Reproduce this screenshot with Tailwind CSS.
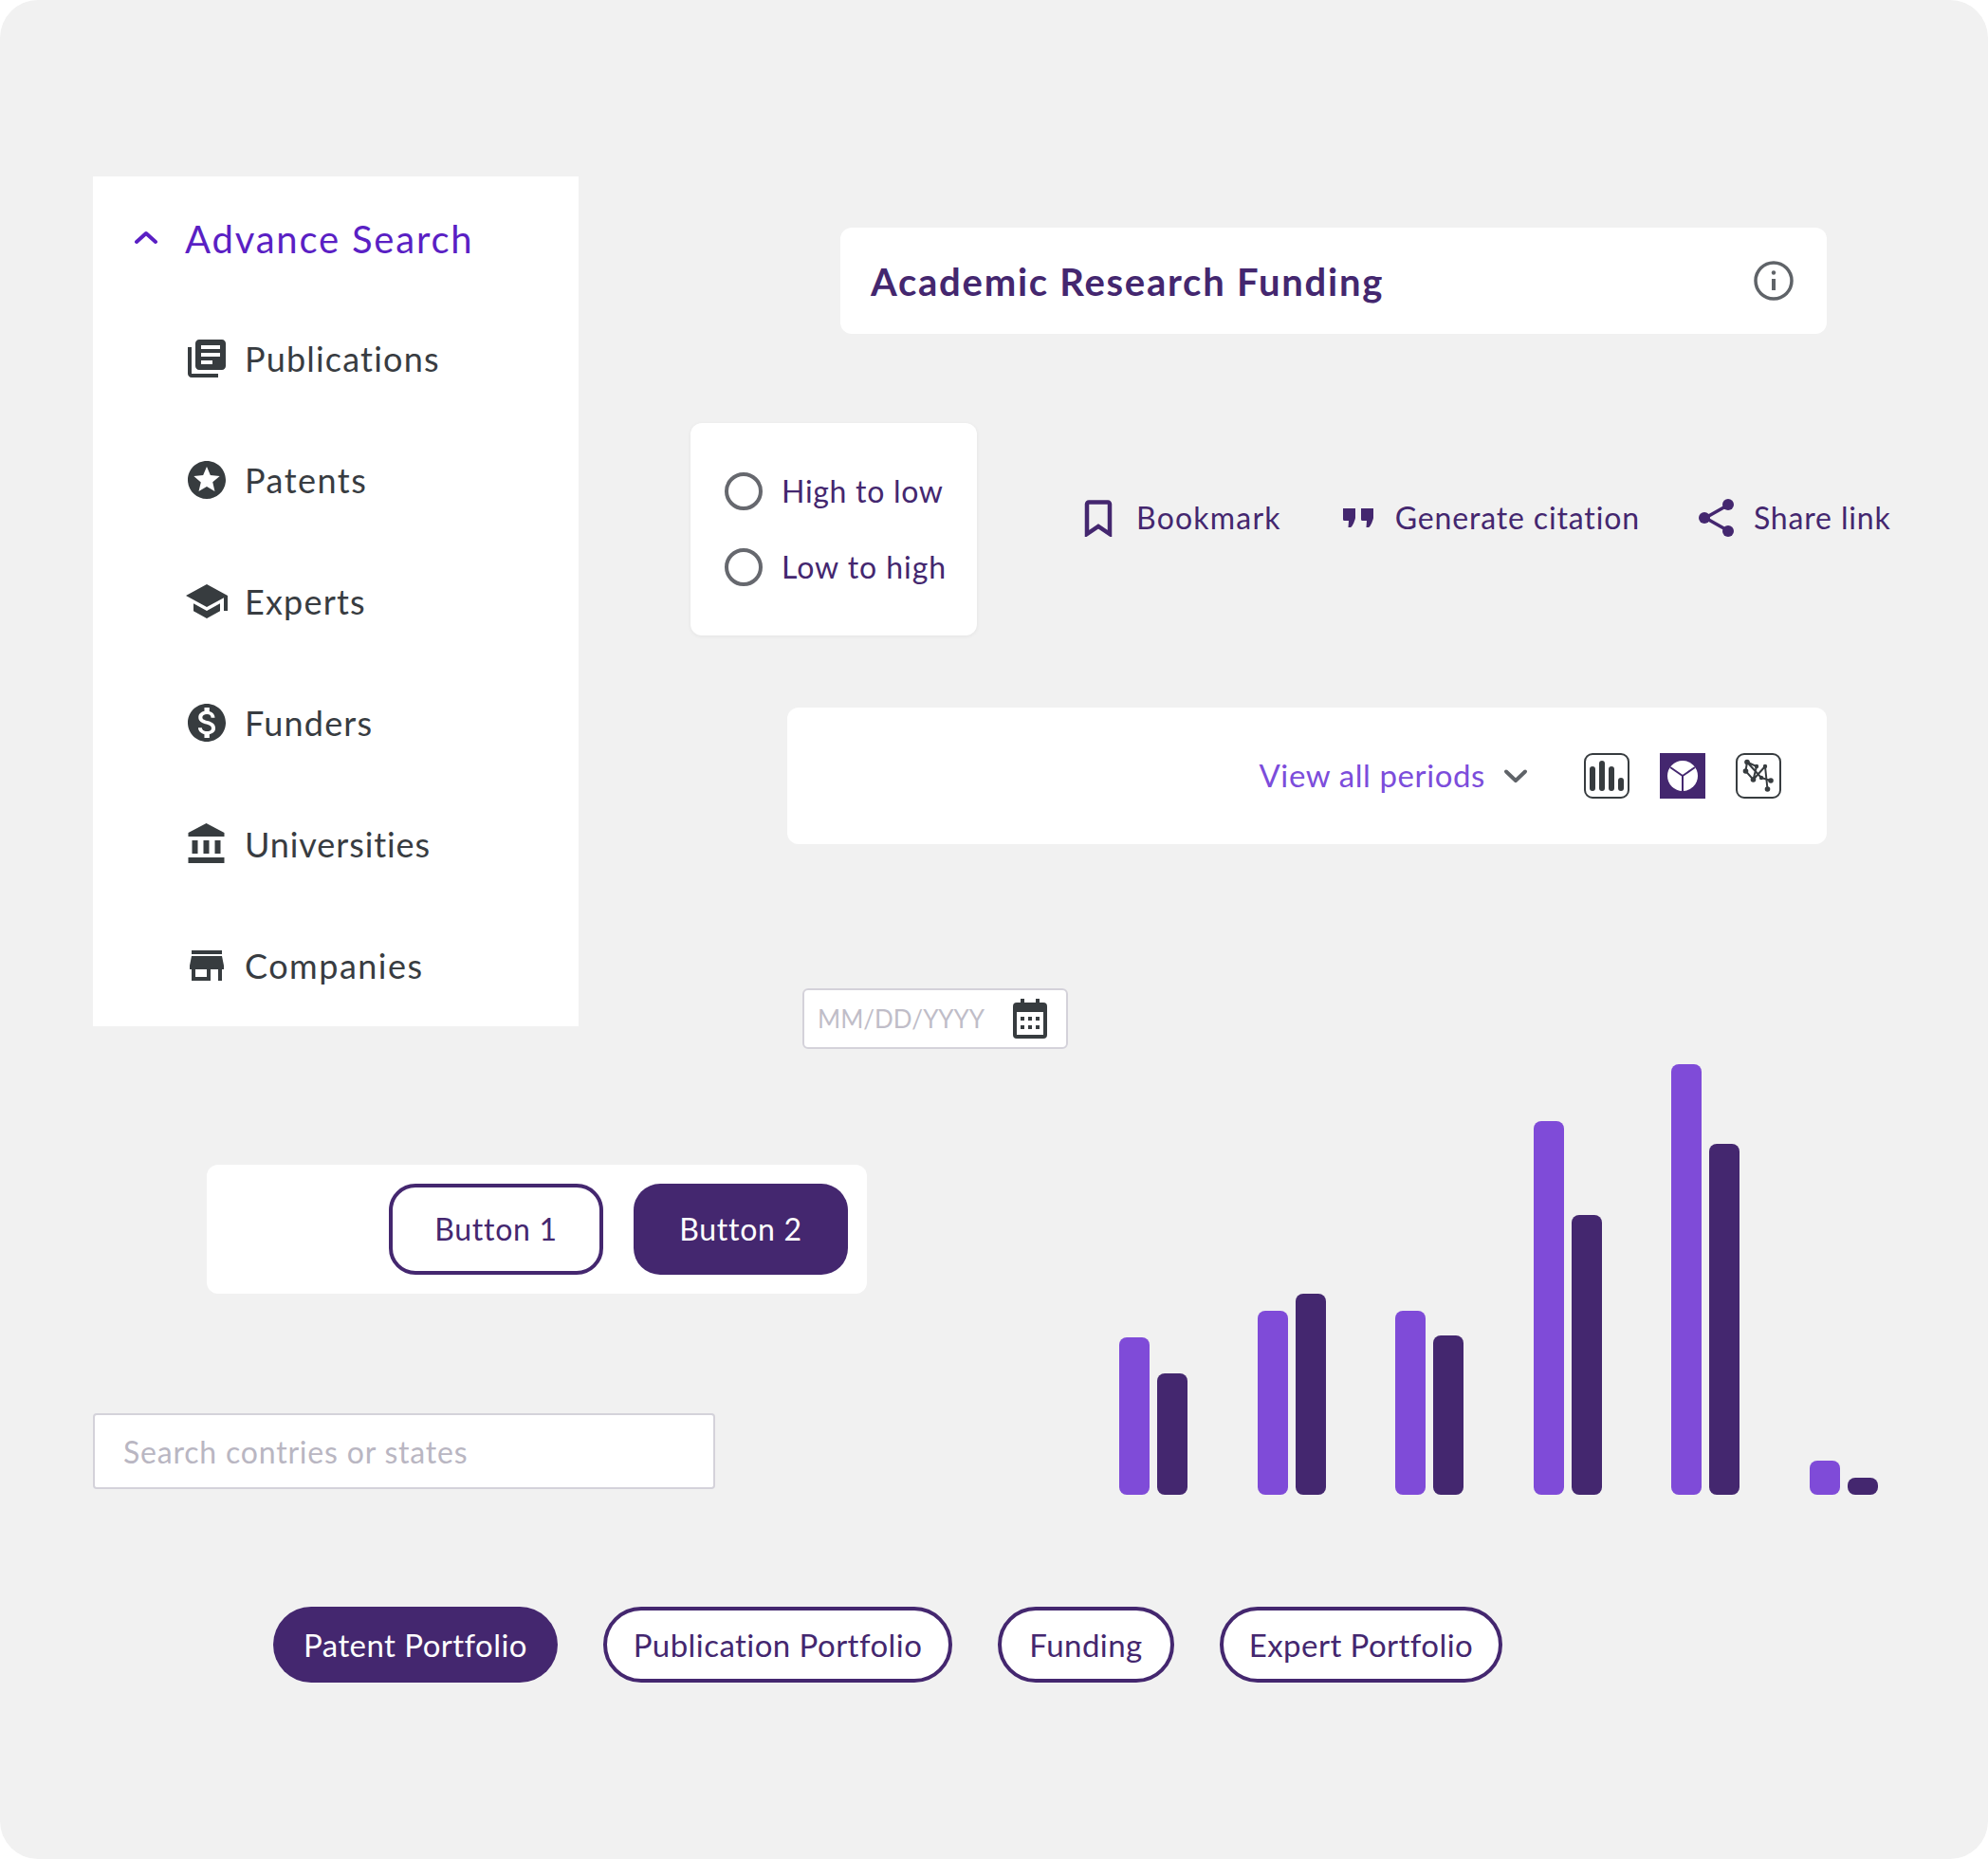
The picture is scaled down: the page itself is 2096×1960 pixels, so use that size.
<!doctype html>
<html lang="en">
<head>
<meta charset="utf-8">
<title>UI components</title>
<script src="https://cdn.jsdelivr.net/npm/@tailwindcss/browser@4"></script>
</head>
<body class="bg-white font-[Lato,sans-serif]">
<main class="w-[2096px] h-[1960px] bg-[#f1f1f1] rounded-[40px] overflow-hidden pt-[186px]">
  <!-- Upper section -->
  <section class="flex items-start h-[920px] pl-[98px]">
    <nav class="w-[512px] h-[896px] bg-white pt-[34px] shrink-0 text-[#383c41]">
      <div class="flex items-center h-16 pl-[42px] text-[#5a1fc4]">
        <svg class="w-7 h-7" viewBox="0 0 28 28" fill="none" stroke="currentColor" stroke-width="4" stroke-linecap="round" stroke-linejoin="round"><path d="M4 17l10-9 10 9"/></svg>
        <span class="ml-[27px] text-[40px] leading-none tracking-[1.8px]">Advance Search</span>
      </div>
      <ul class="mt-[70px] pl-[96px] flex flex-col gap-20 text-[36px] leading-none tracking-[1.2px]">
        <li class="flex items-center h-12 gap-4"><svg class="w-12 h-12" viewBox="0 0 24 24" fill="#373c3f"><path d="M4 6H2v14c0 1.1.9 2 2 2h14v-2H4V6zm16-4H8c-1.1 0-2 .9-2 2v12c0 1.1.9 2 2 2h12c1.1 0 2-.9 2-2V4c0-1.1-.9-2-2-2zm-1 9H9V9h10v2zm-4 4H9v-2h6v2zm4-8H9V5h10v2z"/></svg>Publications</li>
        <li class="flex items-center h-12 gap-4 tracking-[1.5px]"><svg class="w-12 h-12" viewBox="0 0 24 24" fill="#373c3f"><path d="M11.99 2C6.47 2 2 6.48 2 12s4.47 10 9.99 10C17.52 22 22 17.52 22 12S17.52 2 11.99 2zm4.24 16L12 15.45 7.77 18l1.12-4.81-3.73-3.23 4.92-.42L12 5l1.92 4.53 4.92.42-3.73 3.23L16.23 18z"/></svg>Patents</li>
        <li class="flex items-center h-12 gap-4"><svg class="w-12 h-12" viewBox="0 0 24 24" fill="#373c3f"><path d="M5 13.18v4L12 21l7-3.82v-4L12 17l-7-3.82zM12 3L1 9l11 6 9-4.91V17h2V9L12 3z"/></svg>Experts</li>
        <li class="flex items-center h-12 gap-4"><svg class="w-12 h-12" viewBox="0 0 24 24" fill="#373c3f"><path d="M12 2C6.48 2 2 6.48 2 12s4.48 10 10 10 10-4.48 10-10S17.52 2 12 2zm1.41 16.09V20h-2.67v-1.93c-1.71-.36-3.16-1.46-3.27-3.4h1.96c.1 1.05.82 1.87 2.65 1.87 1.96 0 2.4-.98 2.4-1.59 0-.83-.44-1.61-2.67-2.14-2.48-.6-4.18-1.62-4.18-3.67 0-1.72 1.39-2.84 3.11-3.21V4h2.67v1.95c1.86.45 2.79 1.86 2.85 3.39H14.3c-.05-1.11-.64-1.87-2.22-1.87-1.5 0-2.4.68-2.4 1.64 0 .84.65 1.39 2.67 1.91s4.18 1.39 4.18 3.91c-.01 1.83-1.38 2.83-3.12 3.16z"/></svg>Funders</li>
        <li class="flex items-center h-12 gap-4 tracking-[0.9px]"><svg class="w-12 h-12" viewBox="1 0 21.5 24" fill="#373c3f"><path d="M4 10v7h3v-7H4zm6 0v7h3v-7h-3zM2 22h19v-3H2v3zm14-12v7h3v-7h-3zm-4.5-9L2 6v2h19V6l-9.5-5z"/></svg>Universities</li>
        <li class="flex items-center h-12 gap-4 tracking-[1.5px]"><svg class="w-12 h-12" viewBox="0 0 24 24" fill="#373c3f"><path d="M20 4H4v2h16V4zm1 10v-2l-1-5H4l-1 5v2h1v6h10v-6h4v6h2v-6h1zm-9 4H6v-4h6v4z"/></svg>Companies</li>
      </ul>
    </nav>

    <div class="flex flex-col items-start">
      <div class="mt-[54px] ml-[276px] w-[1040px] h-[112px] bg-white rounded-xl flex items-center justify-between pl-8 pr-[34px]">
        <h1 class="pt-0.5 text-[40px] leading-none font-bold tracking-[1.75px] text-[#44276f]">Academic Research Funding</h1>
        <svg class="w-[44px] h-[44px]" viewBox="0 0 44 44" fill="none" stroke="#5f6368" stroke-width="3.5"><circle cx="22" cy="22" r="19"/><path d="M22 20v12" stroke-width="4"/><circle cx="22" cy="13.5" r="2.2" fill="#5f6368" stroke="none"/></svg>
      </div>

      <div class="mt-[94px] ml-[118px] flex items-center">
        <div class="w-[302px] h-[224px] bg-white rounded-xl shadow-[0_1px_4px_rgba(0,0,0,0.06)] pl-9 pt-[52px] flex flex-col gap-10 text-[32px] leading-none tracking-[0.7px] text-[#44276f]">
          <label class="flex items-center h-10 gap-5"><span class="w-10 h-10 rounded-full border-4 border-[#66686e] bg-white"></span>High to low</label>
          <label class="flex items-center h-10 gap-5 tracking-[0.95px]"><span class="w-10 h-10 rounded-full border-4 border-[#66686e] bg-white"></span>Low to high</label>
        </div>
        <div class="ml-[110px] -mt-[24px] flex items-center text-[32px] leading-none tracking-[0.85px] text-[#44276f]">
          <svg class="w-[36px] h-[40px]" viewBox="0 0 36 40" fill="none" stroke="#44276f" stroke-width="4.5"><path d="M6 37V5.5a2 2 0 0 1 2-2h20a2 2 0 0 1 2 2V37l-12-8z"/></svg>
          <span class="ml-[22px] tracking-[1.2px]">Bookmark</span>
          <svg class="w-[36px] h-[24px] ml-[63px]" viewBox="0 0 36 24" fill="#44276f"><path d="M2 2h13v10c0 1-3 10-5 10H7.500L8 15H3.500A1.500 1.500 0 0 1 2 13.500zM21 2h13v10c0 1-3 10-5 10h-2.500l.5-7h-4.500a1.500 1.500 0 0 1-1.500-1.500z"/></svg>
          <span class="ml-[21px]">Generate citation</span>
          <svg class="w-[40px] h-[42px] ml-[61px]" viewBox="0 0 40 42" fill="#44276f" stroke="#44276f"><path d="M31 8 8 21l23 13" fill="none" stroke-width="3.5"/><circle cx="32" cy="7" r="6" stroke="none"/><circle cx="7" cy="21" r="6" stroke="none"/><circle cx="32" cy="35" r="6" stroke="none"/></svg>
          <span class="ml-[19px]">Share link</span>
        </div>
      </div>

      <div class="mt-[76px] ml-[220px] w-[1096px] h-[144px] bg-white rounded-xl flex items-center justify-end pr-12">
        <span class="-mt-0.5 text-[#7c4ddb] text-[33px] leading-none tracking-[0.6px]">View all periods</span>
        <svg class="w-7 h-7 ml-[18px]" viewBox="0 0 28 28" fill="none" stroke="#5f6368" stroke-width="4" stroke-linecap="round" stroke-linejoin="round"><path d="M4 9.500l10 9.500 10-9.500"/></svg>
        <svg class="w-12 h-12 ml-[58px]" viewBox="0 0 48 48" fill="#373c3f"><rect x="1" y="1" width="46" height="46" rx="8" fill="none" stroke="#373c3f" stroke-width="2"/><rect x="6" y="14" width="6" height="26" rx="3"/><rect x="16" y="8" width="6" height="32" rx="3"/><rect x="26" y="14" width="6" height="26" rx="3"/><rect x="36" y="26" width="6" height="14" rx="3"/></svg>
        <svg class="w-12 h-12 ml-8" viewBox="0 0 48 48"><rect width="48" height="48" fill="#44276f"/><circle cx="24" cy="24" r="16" fill="#fff"/><path d="M24 24v16M24 24 11 15M24 24l13-9" stroke="#44276f" stroke-width="2" fill="none"/></svg>
        <svg class="w-12 h-12 ml-8" viewBox="0 0 48 48" fill="#373c3f"><rect x="1" y="1" width="46" height="46" rx="8" fill="none" stroke="#373c3f" stroke-width="2"/><path d="M12 9.500l10 4.500-3.500 14-8-9zM31 14 18.500 28M31 14l2.500 24M27 26l10 3M12 9.500l15 16.500" fill="none" stroke="#373c3f" stroke-width="2"/><circle cx="12" cy="9.500" r="2.800"/><circle cx="22" cy="14" r="2.200"/><circle cx="31" cy="14" r="2.200"/><circle cx="10.500" cy="19" r="2.800"/><circle cx="18.500" cy="28" r="2.800"/><circle cx="27" cy="26" r="2.200"/><circle cx="37" cy="29" r="2.800"/><circle cx="33.500" cy="38" r="2.800"/></svg>
      </div>

      <div class="mt-[152px] ml-[236px] w-[280px] h-16 bg-white border-2 border-[#d4d2da] rounded-md flex items-center justify-between pl-[14px] pr-[20px] text-[26px] leading-none text-[#c0bdc8]">
        <span>MM/DD/YYYY</span>
        <svg class="w-9 h-[42px]" viewBox="0 0 36 42" fill="#373c3f"><path d="M8 0h4v4h12V0h4v4h4a4 4 0 0 1 4 4v30a4 4 0 0 1-4 4H4a4 4 0 0 1-4-4V8a4 4 0 0 1 4-4h4zM4 14v24h28V14z"/><path d="M8 19h4v4H8zM16 19h4v4h-4zM24 19h4v4h-4zM8 28h4v4H8zM16 28h4v4h-4zM24 28h4v4h-4z"/></svg>
      </div>
    </div>
  </section>

  <!-- Middle section -->
  <section class="mt-4 flex items-start pl-[98px]">
    <div class="w-[1082px] shrink-0 pt-[106px]">
      <div class="ml-[120px] w-[696px] h-[136px] bg-white rounded-xl flex items-center justify-end gap-8 pr-5 text-[32px] leading-none tracking-[0.7px]">
        <button class="w-[226px] h-24 rounded-[28px] border-4 border-[#44276f] bg-white text-[#44276f]">Button 1</button>
        <button class="w-[226px] h-24 rounded-[28px] bg-[#44276f] text-white">Button 2</button>
      </div>
      <div class="mt-[126px] w-[656px] h-20 bg-white border-2 border-[#d4d2da] rounded flex items-center pl-[30px] pt-0.5 text-[32px] leading-none tracking-[0.8px] text-[#b9b6c2]">Search contries or states</div>
    </div>
    <div class="flex items-end h-[454px] gap-[73.6px]">
      <div class="flex items-end gap-2"><div class="w-8 h-[166px] bg-[#7f4bd8] rounded-lg"></div><div class="w-8 h-[128px] bg-[#44276f] rounded-lg"></div></div>
      <div class="flex items-end gap-2"><div class="w-8 h-[194px] bg-[#7f4bd8] rounded-lg"></div><div class="w-8 h-[212px] bg-[#44276f] rounded-lg"></div></div>
      <div class="flex items-end gap-2"><div class="w-8 h-[194px] bg-[#7f4bd8] rounded-lg"></div><div class="w-8 h-[168px] bg-[#44276f] rounded-lg"></div></div>
      <div class="flex items-end gap-2"><div class="w-8 h-[394px] bg-[#7f4bd8] rounded-lg"></div><div class="w-8 h-[295px] bg-[#44276f] rounded-lg"></div></div>
      <div class="flex items-end gap-2"><div class="w-8 h-[454px] bg-[#7f4bd8] rounded-lg"></div><div class="w-8 h-[370px] bg-[#44276f] rounded-lg"></div></div>
      <div class="flex items-end gap-2"><div class="w-8 h-[36px] bg-[#7f4bd8] rounded-lg"></div><div class="w-8 h-[18px] bg-[#44276f] rounded-lg"></div></div>
    </div>
  </section>

  <!-- Pills -->
  <section class="mt-[118px] pl-[288px] flex gap-12 text-[33px] leading-none tracking-[0.45px] text-[#44276f]">
    <button class="w-[300px] h-20 rounded-full bg-[#44276f] text-white">Patent Portfolio</button>
    <button class="w-[368px] h-20 rounded-full border-4 border-[#44276f] bg-white">Publication Portfolio</button>
    <button class="w-[186px] h-20 rounded-full border-4 border-[#44276f] bg-white">Funding</button>
    <button class="w-[298px] h-20 rounded-full border-4 border-[#44276f] bg-white">Expert Portfolio</button>
  </section>
</main>
</body>
</html>
